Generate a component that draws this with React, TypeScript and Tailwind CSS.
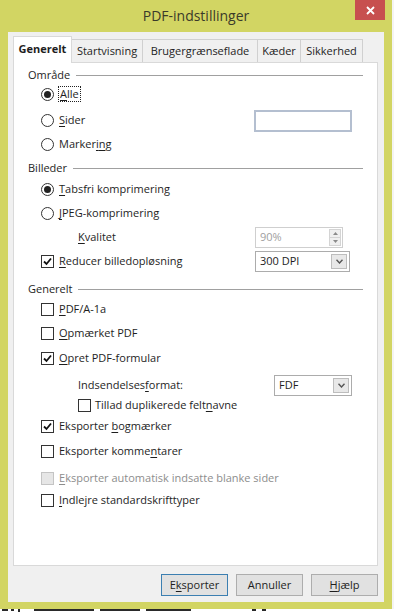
import type { ReactNode } from "react";

const font = { fontFamily: '"Open Sans", "Noto Sans", sans-serif' };

function U({ children }: { children: ReactNode }) {
  return <span className="underline underline-offset-2">{children}</span>;
}

function Radio({ checked }: { checked?: boolean }) {
  return (
    <span className="w-[13px] h-[13px] rounded-full border border-[#333] bg-white flex items-center justify-center shrink-0">
      {checked && <span className="w-[7px] h-[7px] rounded-full bg-[#222]" />}
    </span>
  );
}

function Check({ checked, disabled }: { checked?: boolean; disabled?: boolean }) {
  return (
    <span
      className={`w-[13px] h-[13px] border flex items-center justify-center shrink-0 ${
        disabled ? "border-[#c4c4c4] bg-[#e6e6e6]" : "border-[#333] bg-white"
      }`}
    >
      {checked && (
        <svg width="9" height="9" viewBox="0 0 9 9">
          <path d="M1 4.5 L3.5 7 L8 1.5" fill="none" stroke="#111" strokeWidth="1.8" />
        </svg>
      )}
    </span>
  );
}

function Section({ label, className }: { label: string; className: string }) {
  return (
    <div className={`flex items-center h-[20px] pl-[14px] pr-[14px] gap-[6px] ${className}`}>
      <span className="text-[#1e1e1e]">{label}</span>
      <span className="flex-1 h-px bg-[#a0a0a0]" />
    </div>
  );
}

function Combo({ value, className }: { value: string; className: string }) {
  return (
    <div className={`h-[21px] border border-[#acacac] bg-white flex items-center pl-[4px] pr-[2px] ${className}`}>
      <span className="flex-1 text-[#1e1e1e]">{value}</span>
      <span className="w-[16px] h-[15px] border border-[#bdbdbd] bg-[#e8e8e8] flex items-center justify-center">
        <svg width="7" height="5" viewBox="0 0 7 5">
          <path d="M0.5 0.8 L3.5 4 L6.5 0.8" fill="none" stroke="#555" strokeWidth="1.4" />
        </svg>
      </span>
    </div>
  );
}

export default function App() {
  return (
    <div className="w-[394px] h-[612px] bg-[#f4f4f4] overflow-hidden text-[11px]" style={font}>
      <div className="relative w-[392px] h-[609px] bg-[#d2d563] flex flex-col">
        {/* title bar */}
        <div className="h-[32px] flex items-center justify-center">
          <span className="text-[14px] text-[#3a3a2a] -mt-[2px]">PDF-indstillinger</span>
        </div>
        <div className="absolute top-0 left-[355px] w-[30px] h-[20px] bg-[#c7504f] flex items-center justify-center">
          <svg width="9" height="9" viewBox="0 0 9 9">
            <path d="M1 1 L8 8 M8 1 L1 8" stroke="white" strokeWidth="1.8" />
          </svg>
        </div>

        {/* client area */}
        <div className="ml-[8px] w-[376px] h-[570px] bg-[#f0f0f0] flex flex-col">
          {/* tabs */}
          <div className="flex items-end h-[26px] ml-[5px] mt-[4px] relative z-10">
            <div className="h-[27px] w-[59px] bg-white border border-b-0 border-[#d9d9d9] flex items-center justify-center font-bold text-[#1e1e1e] -mb-px pb-[2px]">
              Generelt
            </div>
            <div className="h-[23px] w-[71px] bg-[#f0f0f0] border border-b-0 border-l-0 border-[#d0d0d0] flex items-center justify-center text-[#1e1e1e]">
              Startvisning
            </div>
            <div className="h-[23px] w-[115px] bg-[#f0f0f0] border border-b-0 border-l-0 border-[#d0d0d0] flex items-center justify-center text-[#1e1e1e]">
              Brugergrænseflade
            </div>
            <div className="h-[23px] w-[43px] bg-[#f0f0f0] border border-b-0 border-l-0 border-[#d0d0d0] flex items-center justify-center text-[#1e1e1e]">
              Kæder
            </div>
            <div className="h-[23px] w-[62px] bg-[#f0f0f0] border border-b-0 border-l-0 border-[#d0d0d0] flex items-center justify-center text-[#1e1e1e]">
              Sikkerhed
            </div>
          </div>

          {/* panel */}
          <div className="ml-[5px] w-[365px] h-[504px] bg-white border border-[#d9d9d9] flex flex-col text-[#1e1e1e]">
            <Section label="Område" className="mt-[2px]" />
            <div className="flex items-center h-[18px] pl-[27px] gap-[4px]">
              <Radio checked />
              <span className="border border-dotted border-[#222] px-px leading-[14px]">
                <U>A</U>lle
              </span>
            </div>
            <div className="flex items-center h-[22px] pl-[27px] gap-[5px] mt-[6px]">
              <Radio />
              <span>
                <U>S</U>ider
              </span>
              <span className="ml-auto mr-[25px] w-[98px] h-[22px] border-2 border-[#b4bfd0] bg-white mt-[2px]" />
            </div>
            <div className="flex items-center h-[18px] pl-[27px] gap-[5px] mt-[4px]">
              <Radio />
              <span>
                Marker<U>i</U>
                <U>n</U>g
              </span>
            </div>

            <Section label="Billeder" className="mt-[5px]" />
            <div className="flex items-center h-[18px] pl-[27px] gap-[5px] mt-[2px]">
              <Radio checked />
              <span>
                <U>T</U>absfri komprimering
              </span>
            </div>
            <div className="flex items-center h-[18px] pl-[27px] gap-[5px] mt-[6px]">
              <Radio />
              <span>
                <U>J</U>PEG-komprimering
              </span>
            </div>
            <div className="flex items-center h-[21px] pl-[64px] mt-[5px]">
              <span>
                <U>K</U>valitet
              </span>
              <div className="ml-auto mr-[34px] w-[88px] h-[21px] border border-[#cfcfcf] bg-white flex items-center pl-[4px] pr-[1px]">
                <span className="flex-1 text-[#a0a0a0]">90%</span>
                <div className="flex flex-col w-[12px] h-[17px] border border-[#d4d4d4] bg-[#efefef]">
                  <span className="flex-1 flex items-center justify-center border-b border-[#d4d4d4]">
                    <svg width="5" height="3" viewBox="0 0 5 3">
                      <path d="M0 3 L2.5 0 L5 3 Z" fill="#8a8a8a" />
                    </svg>
                  </span>
                  <span className="flex-1 flex items-center justify-center">
                    <svg width="5" height="3" viewBox="0 0 5 3">
                      <path d="M0 0 L2.5 3 L5 0 Z" fill="#8a8a8a" />
                    </svg>
                  </span>
                </div>
              </div>
            </div>
            <div className="flex items-center h-[21px] pl-[27px] gap-[5px] mt-[3px]">
              <Check checked />
              <span>
                <U>R</U>educer billedopløsning
              </span>
              <Combo value="300 DPI" className="ml-auto mr-[27px] w-[95px]" />
            </div>

            <Section label="Generelt" className="mt-[7px]" />
            <div className="flex items-center h-[18px] pl-[27px] gap-[5px] mt-[1px]">
              <Check />
              <span>
                <U>P</U>DF/A-1a
              </span>
            </div>
            <div className="flex items-center h-[18px] pl-[27px] gap-[5px] mt-[6px]">
              <Check />
              <span>
                <U>O</U>pmærket PDF
              </span>
            </div>
            <div className="flex items-center h-[18px] pl-[27px] gap-[5px] mt-[7px]">
              <Check checked />
              <span>
                <U>O</U>pret PDF-formular
              </span>
            </div>
            <div className="flex items-center h-[21px] pl-[64px] mt-[8px]">
              <span>
                Indsendelses<U>f</U>ormat:
              </span>
              <Combo value="FDF" className="ml-auto mr-[25px] w-[78px]" />
            </div>
            <div className="flex items-center h-[16px] pl-[64px] gap-[4px] mt-[1px]">
              <Check />
              <span>
                Tillad duplikerede felt<U>n</U>avne
              </span>
            </div>
            <div className="flex items-center h-[18px] pl-[27px] gap-[5px] mt-[4px]">
              <Check checked />
              <span>
                Eksporter <U>b</U>ogmærker
              </span>
            </div>
            <div className="flex items-center h-[18px] pl-[27px] gap-[5px] mt-[7px]">
              <Check />
              <span>
                Eksporter komme<U>n</U>tarer
              </span>
            </div>
            <div className="flex items-center h-[18px] pl-[27px] gap-[5px] mt-[9px]">
              <Check disabled />
              <span className="text-[#8d8d8d]">
                <U>E</U>ksporter automatisk indsatte blanke sider
              </span>
            </div>
            <div className="flex items-center h-[18px] pl-[27px] gap-[5px] mt-[4px]">
              <Check />
              <span>
                <U>I</U>ndlejre standardskrifttyper
              </span>
            </div>
          </div>

          {/* buttons */}
          <div className="flex justify-end gap-[8px] pr-[6px] mt-[8px] text-[#1e1e1e]">
            <button className="w-[67px] h-[22px] bg-[#e1e1e1] border border-[#3c7fb1] flex items-center justify-center">
              <span>
                E<U>k</U>sporter
              </span>
            </button>
            <button className="w-[67px] h-[22px] bg-[#e1e1e1] border border-[#adadad] flex items-center justify-center">
              Annuller
            </button>
            <button className="w-[67px] h-[22px] bg-[#e1e1e1] border border-[#adadad] flex items-center justify-center">
              <span>
                <U>H</U>jælp
              </span>
            </button>
          </div>
        </div>
      </div>
      {/* glimpse of the document behind the dialog */}
      <div className="h-[3px] bg-white">
        <svg width="394" height="3" viewBox="0 0 394 3">
          <g fill="#2a2a2a">
            <rect x="2" y="0" width="6" height="2" />
            <rect x="11" y="0" width="3" height="2" />
            <rect x="18" y="0" width="2" height="3" />
            <rect x="34" y="0" width="60" height="2" />
            <rect x="100" y="0" width="40" height="2" />
            <rect x="146" y="0" width="45" height="2" />
            <rect x="252" y="0" width="4" height="2" />
            <rect x="262" y="0" width="4" height="2" />
          </g>
        </svg>
      </div>
    </div>
  );
}
